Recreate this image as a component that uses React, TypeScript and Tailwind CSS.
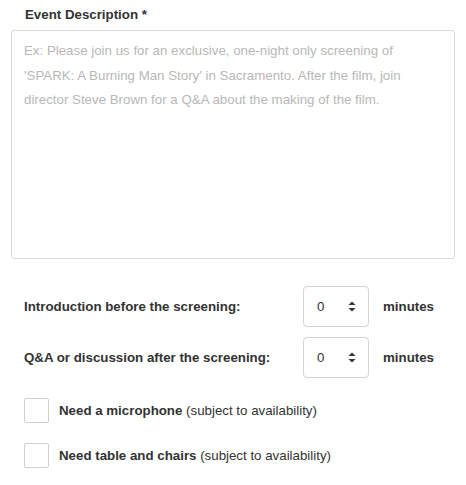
const FONT = "font-['Liberation_Sans',Arial,sans-serif]"

function Stepper() {
  return (
    <div className="flex items-center justify-between w-[66px] h-[41px] border border-[#d4d4d4] rounded-[4px] pl-[13px] pr-[12px] bg-white">
      <span className="text-[13.3px] text-[#333]">0</span>
      <svg width="8" height="11" viewBox="0 0 8 11" className="text-[#333]">
        <path d="M4 0.5L7.5 4H0.5Z" fill="currentColor" />
        <path d="M4 10.5L7.5 7H0.5Z" fill="currentColor" />
      </svg>
    </div>
  )
}

function Checkbox({ strong, rest }: { strong: string; rest: string }) {
  return (
    <label className="flex items-center gap-[10px]">
      <span className="w-[25px] h-[25px] border border-[#cfcfcf] rounded-[2px] bg-white shrink-0" />
      <span className="text-[13.3px] text-[#333]">
        <b className="font-bold">{strong}</b> {rest}
      </span>
    </label>
  )
}

export default function App() {
  return (
    <div className={`${FONT} w-[466px] h-[485px] bg-white text-[#333]`}>
      <div className="pl-[25px] pt-[7px] text-[13.3px] font-bold leading-[16px]">Event Description *</div>

      <div className="mx-[11px] mt-[7px] h-[229px] border border-[#d9d9d9] rounded-[3px] px-[12px] pt-[8px]">
        <p className="text-[13.3px] leading-[24.5px] text-[#b8b8b8]">
          Ex: Please join us for an exclusive, one-night only screening of 'SPARK: A Burning Man Story' in Sacramento. After the film, join director Steve Brown for a Q&amp;A about the making of the film.
        </p>
      </div>

      <div className="mt-[27px] pl-[24px] flex flex-col gap-[10px]">
        <div className="flex items-center">
          <span className="w-[279px] text-[13.3px] font-bold">Introduction before the screening:</span>
          <Stepper />
          <span className="ml-[14px] text-[13.3px] font-bold">minutes</span>
        </div>
        <div className="flex items-center">
          <span className="w-[279px] text-[13.3px] font-bold">Q&amp;A or discussion after the screening:</span>
          <Stepper />
          <span className="ml-[14px] text-[13.3px] font-bold">minutes</span>
        </div>
      </div>

      <div className="mt-[20px] pl-[24px] flex flex-col gap-[20px]">
        <Checkbox strong="Need a microphone" rest="(subject to availability)" />
        <Checkbox strong="Need table and chairs" rest="(subject to availability)" />
      </div>
    </div>
  )
}
